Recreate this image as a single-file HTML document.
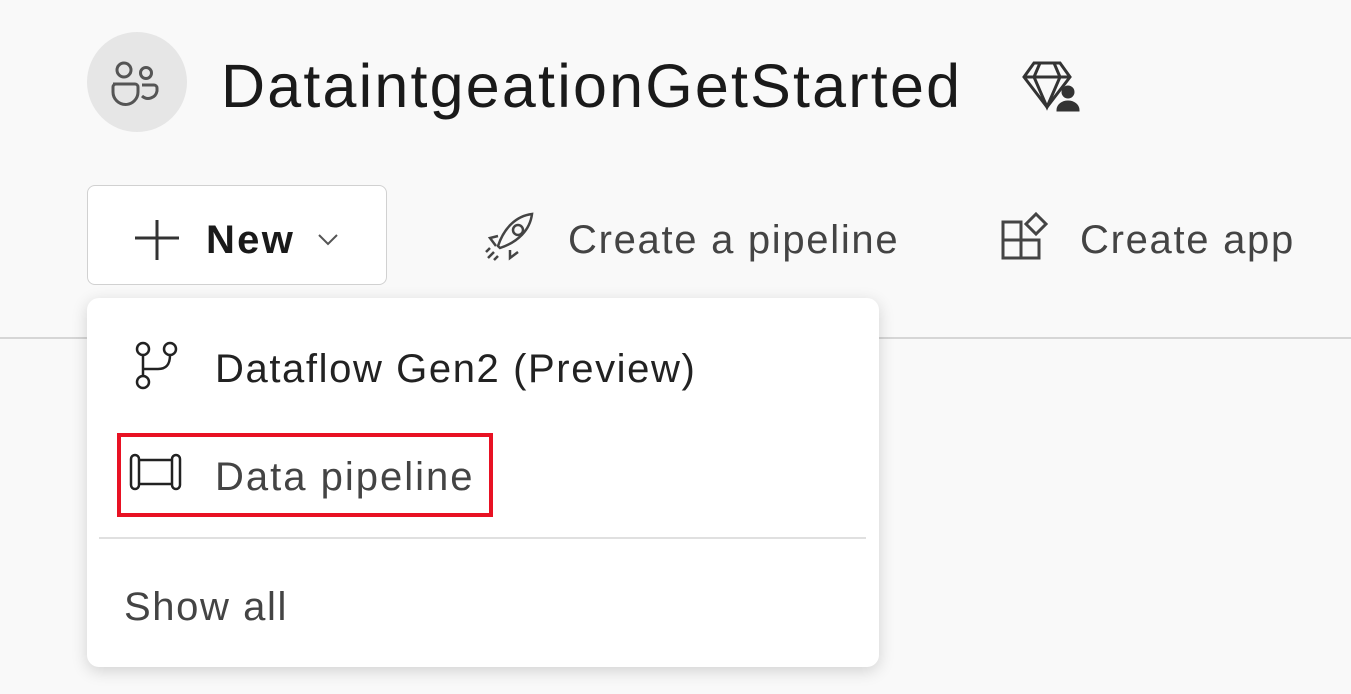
<!DOCTYPE html>
<html><head><style>
body{margin:0;width:1351px;height:694px;background:#f9f9f9;position:relative;overflow:hidden;font-family:"Liberation Sans",sans-serif;}
.a{position:absolute;white-space:nowrap;}
</style></head><body>
<div class="a" style="left:87px;top:32px;width:100px;height:100px;border-radius:50%;background:#e6e6e6"></div>
<svg class="a" style="left:110px;top:60px" width="56" height="46" viewBox="0 0 56 46" fill="none" stroke="#555" stroke-width="3">
<circle cx="14" cy="10" r="7"/><circle cx="36" cy="13" r="5.5"/>
<path d="M3 24h22a3 3 0 0 1 3 3v5a12 12 0 0 1-25 0v-5a3 3 0 0 1 3-3z"/>
<path d="M32 25h12a3 3 0 0 1 3 3v3a9 9 0 0 1-15 5"/></svg>
<div class="a" style="left:221px;top:51px;font-size:61px;color:#1a1a1a;letter-spacing:2.2px">DataintgeationGetStarted</div>
<svg class="a" style="left:1022px;top:60px" width="58" height="54" viewBox="0 0 58 54" fill="none" stroke="#333" stroke-width="3">
<path d="M12 3h26l10 14-23 30L2 17z"/><path d="M2 17h46M18 3l-6 14 13 30 13-30-6-14"/>
<circle cx="46" cy="32" r="5" fill="#333"/><path d="M36 50a10 8 0 0 1 20 0z" fill="#333"/></svg>
<div class="a" style="left:87px;top:185px;width:298px;height:98px;background:#fff;border:1px solid #d1d1d1;border-radius:8px"></div>
<svg class="a" style="left:132px;top:217px" width="50" height="46" stroke="#333" stroke-width="3"><path d="M25 3v40M3 21h44"/></svg>
<div class="a" style="left:206px;top:218px;font-size:40px;font-weight:bold;color:#1a1a1a;letter-spacing:2.3px">New</div>
<svg class="a" style="left:317px;top:232px" width="22" height="14" fill="none" stroke="#555" stroke-width="2"><path d="M2 3l9 9 9-9"/></svg>
<svg class="a" style="left:484px;top:210px" width="54" height="56" fill="none" stroke="#444" stroke-width="2.5">
<path d="M14 36c6-18 18-30 34-32-2 16-14 28-32 34z"/><circle cx="34" cy="20" r="5"/><path d="M14 26l-8 2 6 8M26 40l0 8 8-6M10 42l-6 6M14 46l-4 4M6 38l-4 4"/></svg>
<div class="a" style="left:568px;top:218px;font-size:40px;color:#444;letter-spacing:1.7px">Create a pipeline</div>
<svg class="a" style="left:1000px;top:212px" width="52" height="50" fill="none" stroke="#444" stroke-width="3">
<rect x="3" y="10" width="18" height="18"/><rect x="3" y="28" width="18" height="18"/><rect x="21" y="28" width="18" height="18"/><path d="M36 2l10 10-10 10-10-10z"/></svg>
<div class="a" style="left:1080px;top:218px;font-size:40px;color:#444;letter-spacing:1.7px">Create app</div>
<div class="a" style="left:0;top:337px;width:1351px;height:2px;background:#d6d6d6"></div>
<div class="a" style="left:87px;top:298px;width:792px;height:369px;background:#fff;border-radius:12px;box-shadow:0 4px 16px rgba(0,0,0,.16)"></div>
<svg class="a" style="left:128px;top:338px" width="56" height="56" fill="none" stroke="#222" stroke-width="2.5">
<circle cx="15" cy="11" r="6"/><circle cx="42" cy="11" r="6"/><circle cx="15" cy="44" r="6"/><path d="M15 17v21M42 17c0 10-4 14-12 14H15"/></svg>
<div class="a" style="left:215px;top:347px;font-size:40px;color:#222;letter-spacing:1.6px">Dataflow Gen2 (Preview)</div>
<div class="a" style="left:117px;top:433px;width:368px;height:76px;border:4px solid #e81123"></div>
<svg class="a" style="left:128px;top:452px" width="56" height="42" fill="none" stroke="#222" stroke-width="2.5">
<rect x="3" y="3" width="8" height="34" rx="4"/><rect x="44" y="3" width="8" height="34" rx="4"/><path d="M11 8h33M11 32h33"/></svg>
<div class="a" style="left:215px;top:455px;font-size:40px;color:#444;letter-spacing:2px">Data pipeline</div>
<div class="a" style="left:99px;top:537px;width:767px;height:2px;background:#e0e0e0"></div>
<div class="a" style="left:124px;top:585px;font-size:40px;color:#444;letter-spacing:1.6px">Show all</div>
</body></html>
